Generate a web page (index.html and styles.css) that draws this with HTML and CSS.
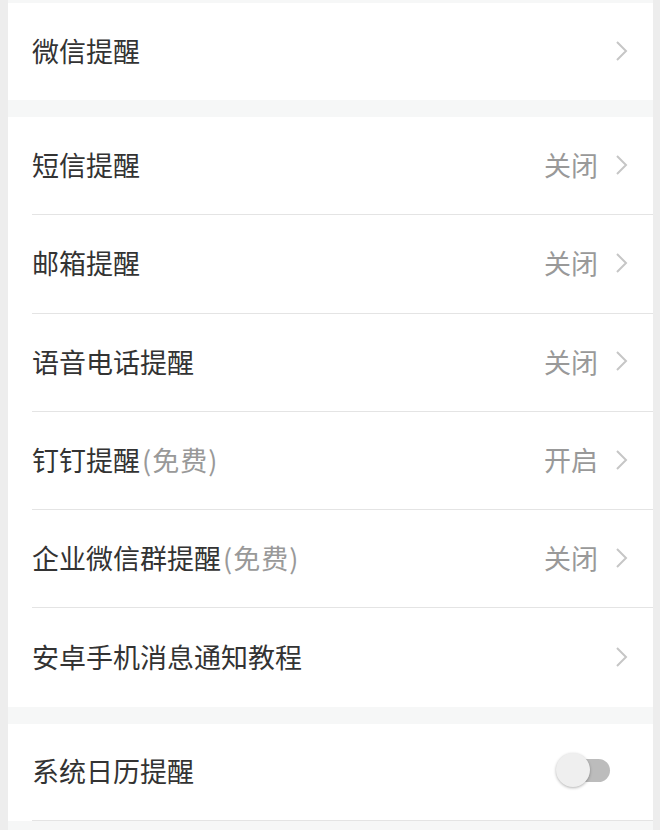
FILE: index.html
```html
<!DOCTYPE html>
<html lang="zh-CN">
  <head>
    <meta charset="UTF-8" />
    <meta name="viewport" content="width=device-width, initial-scale=1.0" />
    <title>提醒设置</title>
    <link rel="stylesheet" href="styles.css">
  </head>

  <body>
    <div class="page">
      <div class="group">
        <div class="item">
          <span class="label">微信提醒</span>
          <span class="arrow"><svg width="14" height="22" viewBox="0 0 14 22"><polyline points="2,2 11,11 2,20" /></svg></span>
        </div>
      </div>

      <div class="group">
        <div class="item">
          <span class="label">短信提醒</span>
          <span class="value">关闭</span>
          <span class="arrow"><svg width="14" height="22" viewBox="0 0 14 22"><polyline points="2,2 11,11 2,20" /></svg></span>
        </div>
        <div class="item">
          <span class="label">邮箱提醒</span>
          <span class="value">关闭</span>
          <span class="arrow"><svg width="14" height="22" viewBox="0 0 14 22"><polyline points="2,2 11,11 2,20" /></svg></span>
        </div>
        <div class="item">
          <span class="label">语音电话提醒</span>
          <span class="value">关闭</span>
          <span class="arrow"><svg width="14" height="22" viewBox="0 0 14 22"><polyline points="2,2 11,11 2,20" /></svg></span>
        </div>
        <div class="item">
          <span class="label">钉钉提醒<em>(免费)</em></span>
          <span class="value">开启</span>
          <span class="arrow"><svg width="14" height="22" viewBox="0 0 14 22"><polyline points="2,2 11,11 2,20" /></svg></span>
        </div>
        <div class="item">
          <span class="label">企业微信群提醒<em>(免费)</em></span>
          <span class="value">关闭</span>
          <span class="arrow"><svg width="14" height="22" viewBox="0 0 14 22"><polyline points="2,2 11,11 2,20" /></svg></span>
        </div>
        <div class="item">
          <span class="label">安卓手机消息通知教程</span>
          <span class="arrow"><svg width="14" height="22" viewBox="0 0 14 22"><polyline points="2,2 11,11 2,20" /></svg></span>
        </div>
      </div>

      <div class="group">
        <div class="item">
          <span class="label">系统日历提醒</span>
          <span class="switch"><i></i></span>
        </div>
      </div>
    </div>
  </body>
</html>
```

FILE: styles.css
```css
* {
  margin: 0;
  padding: 0;
  box-sizing: border-box;
}

html,
body {
  height: 100%;
  overflow: hidden;
}

body {
  background: #ededed;
  font-family: "Noto Sans CJK SC", "Noto Sans", sans-serif;
}

.page {
  height: 100%;
  margin: 0 7px 0 8px;
  padding-top: 3px;
  background: #f6f7f7;
}

.group {
  background: #fff;
  margin-bottom: 17px;
}

.item {
  display: flex;
  align-items: center;
  height: 98.3px;
  margin-left: 24px;
  padding: 0 24px 2px 0;
  border-bottom: 1px solid #e4e4e4;
}

.item:last-child {
  border-bottom: none;
}

.group:first-child .item {
  height: 97px;
}

.group:last-child .item {
  height: 97px;
  border-bottom: 1px solid #e4e4e4;
}

.label {
  flex: 1;
  font-size: 27px;
  color: #333;
}

.label em {
  font-style: normal;
  color: #999;
  padding-left: 2px;
  letter-spacing: 1px;
}

.value {
  font-size: 27px;
  color: #999;
  margin-right: 17px;
}

.arrow {
  display: flex;
}

.arrow polyline {
  fill: none;
  stroke: #c6c6c6;
  stroke-width: 2;
}

.switch {
  position: relative;
  width: 54px;
  height: 23px;
  margin-right: 19px;
}

.switch::before {
  content: "";
  position: absolute;
  left: 14px;
  top: 0;
  width: 40px;
  height: 23px;
  border-radius: 12px;
  background: #bcbcbc;
}

.switch i {
  position: absolute;
  left: 0;
  top: -6px;
  width: 34px;
  height: 34px;
  border-radius: 50%;
  background: #efefef;
  box-shadow: 0 1px 3px rgba(0, 0, 0, 0.3);
}
```
